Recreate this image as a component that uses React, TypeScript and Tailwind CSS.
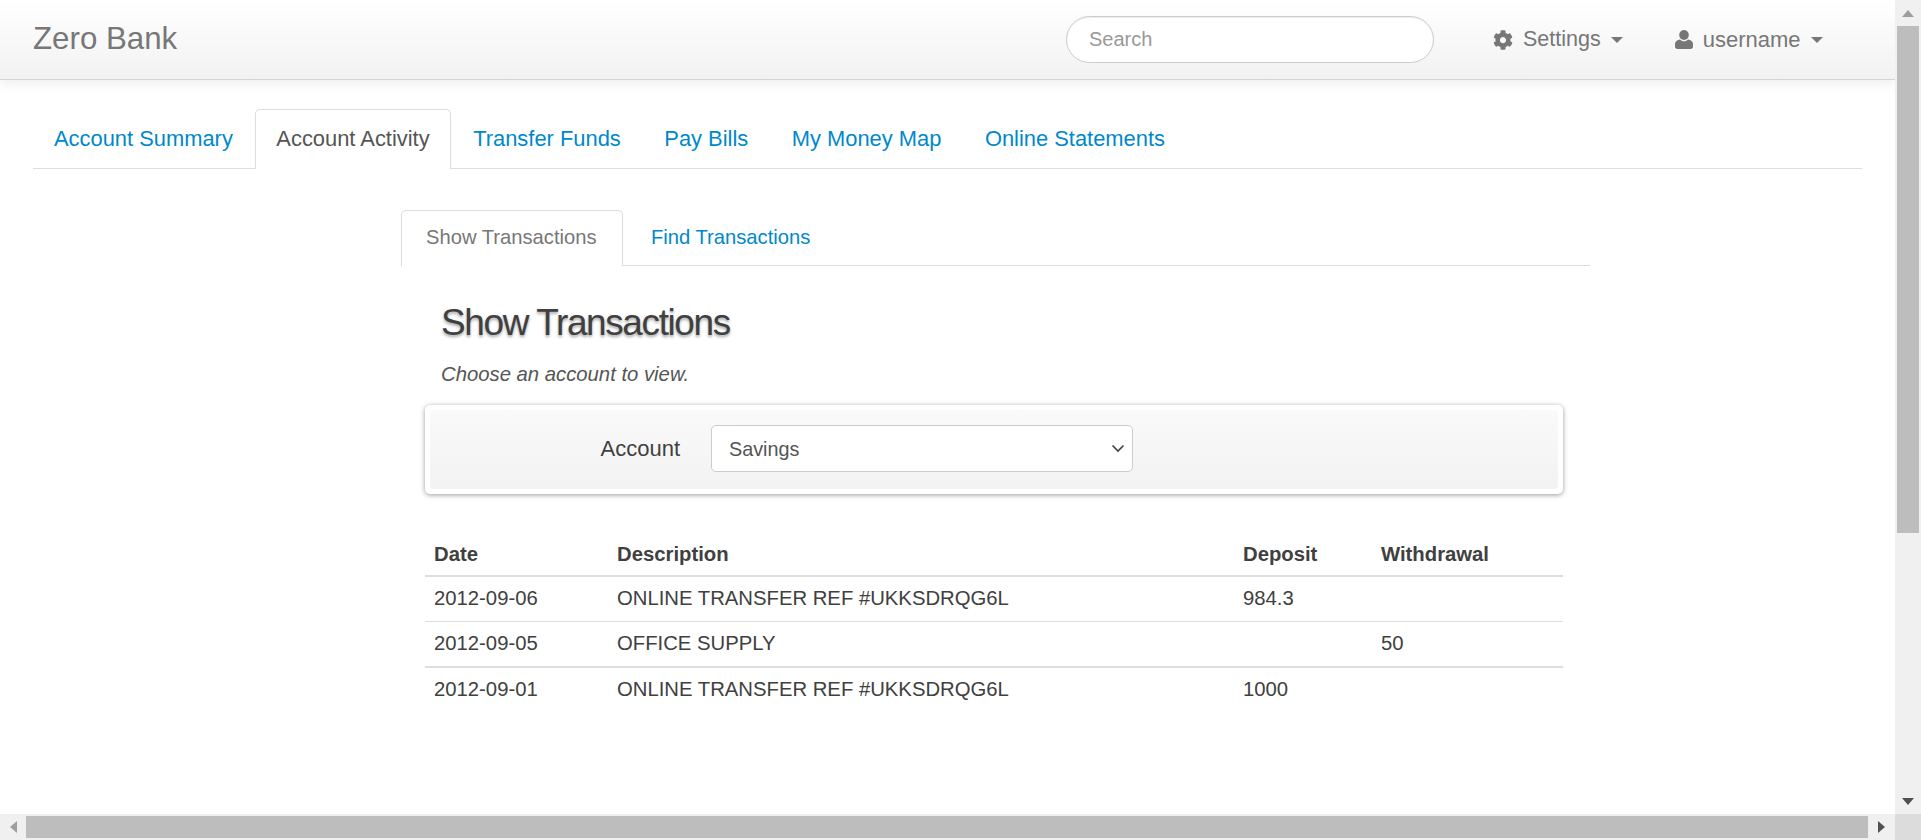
import React from 'react';
import { FaCog } from 'react-icons/fa';

const mainTabs = ['Account Summary', 'Account Activity', 'Transfer Funds', 'Pay Bills', 'My Money Map', 'Online Statements'];

const rows = [
    { date: '2012-09-06', description: 'ONLINE TRANSFER REF #UKKSDRQG6L', deposit: '984.3', withdrawal: '' },
    { date: '2012-09-05', description: 'OFFICE SUPPLY', deposit: '', withdrawal: '50' },
    { date: '2012-09-01', description: 'ONLINE TRANSFER REF #UKKSDRQG6L', deposit: '1000', withdrawal: '' },
];

const Caret = () => <span className="ml-[10px] mt-[1px] border-x-[6px] border-t-[6px] border-x-transparent border-t-[#777777]"></span>;

const UserIcon = () => (
    <svg width="18" height="19" viewBox="0 0 18 19" fill="#777777">
        <ellipse cx="9" cy="5" rx="4.8" ry="5" />
        <path d="M0 16.5V14c0-2.6 2.2-4 5-4.6 1 1.2 2.4 1.8 4 1.8s3-.6 4-1.8c2.800.6 5 2 5 4.600v2.500c0 1.500-1 2.500-2.500 2.500h-13C1 19 0 18 0 16.500z" />
    </svg>
);

const App: React.FC = () => {
    return (
        <div className="flex h-[840px] w-full flex-col overflow-hidden bg-white font-['Liberation_Sans',Arial,sans-serif] text-[#404040]">
            <div className="flex min-h-0 flex-1">
                <div className="min-w-0 flex-1">
                    <header className="flex h-[80px] items-center border-b border-[#d4d4d4] bg-gradient-to-b from-white to-[#f2f2f2] pl-[33px] shadow-[0_3px_12px_rgba(0,0,0,0.08)]">
                        <a className="w-[144px] whitespace-nowrap text-[31.25px] text-[#777777]">Zero Bank</a>
                        <input
                            placeholder="Search"
                            className="ml-[889px] h-[47px] w-[368px] rounded-[24px] border border-[#cccccc] bg-white px-[22px] text-[20px] shadow-[inset_0_1px_1px_rgba(0,0,0,0.075)] outline-none placeholder:text-[#999999]"
                        />
                        <div className="ml-[59px] flex items-center text-[21.5px] text-[#777777]">
                            <FaCog size={20} />
                            <span className="ml-[10px]">Settings</span>
                            <Caret />
                        </div>
                        <div className="ml-[52px] flex items-center text-[22px] text-[#777777]">
                            <UserIcon />
                            <span className="ml-[10px]">username</span>
                            <Caret />
                        </div>
                    </header>

                    <div className="px-[33px] pt-[29px]">
                        <ul className="flex h-[60px] gap-[1.5px] border-b border-[#dddddd]">
                            {mainTabs.map((tab) => (
                                <li
                                    key={tab}
                                    className={
                                        tab === 'Account Activity'
                                            ? 'h-[60px] rounded-t-[5px] border border-b-0 border-[#dddddd] bg-white px-[20px] pt-[16px] text-[21.9px] leading-[26px] text-[#555555]'
                                            : 'h-[59px] px-[21px] pt-[17px] text-[21.9px] leading-[26px] text-[#0088cc]'
                                    }
                                >
                                    {tab}
                                </li>
                            ))}
                        </ul>

                        <div className="ml-[368px] w-[1189px] pt-[41px]">
                            <ul className="flex h-[56px] gap-[2px] border-b border-[#dddddd] text-[20.2px]">
                                <li className="h-[56px] w-[222px] rounded-t-[5px] border border-b-0 border-[#dddddd] bg-white pl-[24px] pt-[11px] text-[#777777]">
                                    Show Transactions
                                </li>
                                <li className="pl-[26px] pt-[12px] text-[#0088cc]">Find Transactions</li>
                            </ul>

                            <h2 className="ml-[40px] mt-[32px] text-[37px] leading-[50px] tracking-[-1.4px] text-[#404040] [text-shadow:0_2px_3px_rgba(0,0,0,0.35)]">
                                Show Transactions
                            </h2>
                            <p className="ml-[40px] mt-[13px] text-[20.3px] italic leading-[26px] text-[#555555]">Choose an account to view.</p>

                            <div className="ml-[24px] mt-[18px] h-[89px] w-[1138px] rounded-[5px] bg-white p-[5px] shadow-[0_1px_5px_rgba(0,0,0,0.4)]">
                                <div className="flex h-[79px] items-center rounded-[4px] bg-gradient-to-b from-[#fafafa] to-[#f2f2f2] pb-[2px]">
                                    <label className="w-[250px] text-right text-[22px] text-[#404040]">Account</label>
                                    <div className="relative ml-[31px] h-[47px] w-[422px] rounded-[5px] border border-[#cccccc] bg-white pl-[17px] pt-[10px] text-[19.8px] leading-[26px] text-[#555555]">
                                        Savings
                                        <svg className="absolute right-[7px] top-[18px]" width="14" height="9" viewBox="0 0 14 9" fill="none">
                                            <path d="M1.5 1.5 7 7l5.5-5.5" stroke="#444444" strokeWidth="1.7" />
                                        </svg>
                                    </div>
                                </div>
                            </div>

                            <table className="ml-[24px] mt-[35px] w-[1138px] table-fixed border-collapse text-[20.3px] text-[#404040]">
                                <colgroup>
                                    <col className="w-[183px]" />
                                    <col className="w-[627px]" />
                                    <col className="w-[138px]" />
                                    <col className="w-[190px]" />
                                </colgroup>
                                <thead>
                                    <tr className="h-[47px] border-b-2 border-[#dddddd]">
                                        <th className="pl-[9px] pr-[8px] pt-[5px] text-left">Date</th>
                                        <th className="pl-[9px] pr-[8px] pt-[5px] text-left">Description</th>
                                        <th className="px-[8px] pt-[5px] text-left">Deposit</th>
                                        <th className="px-[8px] pt-[5px] text-left">Withdrawal</th>
                                    </tr>
                                </thead>
                                <tbody>
                                    {rows.map((row, i) => (
                                        <tr key={row.date} className={i === 1 ? 'h-[46px] border-b-2 border-[#dddddd]' : i === 0 ? 'h-[45px] border-b border-[#dddddd]' : 'h-[45px]'}>
                                            <td className="pb-[2px] pl-[9px] pr-[8px]">{row.date}</td>
                                            <td className="pb-[2px] pl-[9px] pr-[8px]">{row.description}</td>
                                            <td className="px-[8px] pb-[2px]">{row.deposit}</td>
                                            <td className="px-[8px] pb-[2px]">{row.withdrawal}</td>
                                        </tr>
                                    ))}
                                </tbody>
                            </table>
                        </div>
                    </div>
                </div>

                {/* vertical scrollbar */}
                <div className="flex w-[26px] flex-col bg-[#f0f0f0]">
                    <div className="flex h-[26px] items-center justify-center">
                        <svg width="12" height="7" viewBox="0 0 12 7"><path d="M6 0 12 7H0z" fill="#9e9e9e" /></svg>
                    </div>
                    <div className="mx-[2px] h-[507px] bg-[#bdbdbd]"></div>
                    <div className="flex-1"></div>
                    <div className="flex h-[26px] items-center justify-center">
                        <svg width="12" height="7" viewBox="0 0 12 7"><path d="M0 0H12L6 7z" fill="#505050" /></svg>
                    </div>
                </div>
            </div>

            {/* horizontal scrollbar */}
            <div className="flex h-[26px] bg-[#f0f0f0]">
                <div className="flex w-[26px] items-center justify-center">
                    <svg width="7" height="12" viewBox="0 0 7 12"><path d="M7 0V12L0 6z" fill="#9e9e9e" /></svg>
                </div>
                <div className="my-[2px] flex-1 bg-[#bdbdbd]"></div>
                <div className="flex w-[27px] items-center justify-center">
                    <svg width="7" height="12" viewBox="0 0 7 12"><path d="M0 0V12L7 6z" fill="#505050" /></svg>
                </div>
                <div className="w-[26px] bg-[#dcdcdc]"></div>
            </div>
        </div>
    );
};

export default App;
